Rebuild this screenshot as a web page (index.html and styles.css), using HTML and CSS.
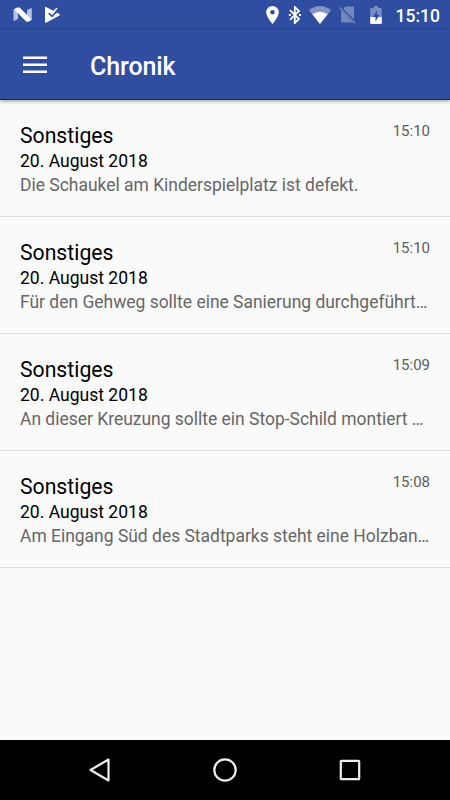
FILE: index.html
```html
<!DOCTYPE html>
<html lang="de">
<head>
    <meta charset="UTF-8">
    <meta name="viewport" content="width=device-width, initial-scale=1.0">
    <title>Chronik</title>
    <link rel="stylesheet" href="styles.css">
</head>
<body>
    <div class="screen">
        <div class="status-bar">
            <div class="notifications">
                <svg class="icon-n" width="20" height="16" viewBox="0 0 20 16">
                    <path d="M.5 2.500L5 1v11L.5 14.200zM14 3L18.800 1v12L14 14.600z" fill="#fff" opacity=".65"/>
                    <path d="M2.500 1.200Q4.500 0 6.600 .6L18.500 12.600Q16.500 15.400 13.200 14.500L1.500 2.800z" fill="#fff"/>
                </svg>
                <svg class="icon-play" width="17" height="18" viewBox="0 0 17 18">
                    <path d="M1 1.700Q1 .7 2 1.100L15.500 8Q16.300 8.700 15.500 9.400L2 16.700Q1 17 1 16z" fill="#fff"/>
                    <path d="M4.800 7.200L8 10.300L15.500 3" fill="none" stroke="#304ea1" stroke-width="1.700"/>
                    <path d="M8.300 7L13 2.300" fill="none" stroke="#fff" stroke-width="1.600"/>
                </svg>
            </div>
            <div class="system">
                <svg class="icon-pin" width="13" height="18" viewBox="0 0 13 18">
                    <path d="M6.500 0A6.300 6.300 0 0 0 .2 6.300C.2 11 6.500 18 6.500 18s6.300-7 6.300-11.700A6.300 6.300 0 0 0 6.500 0zm0 8.600a2.300 2.300 0 1 1 0-4.600 2.300 2.300 0 0 1 0 4.600z" fill="#fff"/>
                </svg>
                <svg class="icon-bluetooth" width="14" height="18" viewBox="0 0 14 18">
                    <path d="M2 4.200L11 13L6.800 17V1L11 5L2 13.800" fill="none" stroke="#fff" stroke-width="1.800"/>
                    <path d="M.8 8h2v2h-2zM11 8h2v2h-2z" fill="#fff"/>
                </svg>
                <svg class="icon-wifi" width="22" height="18" viewBox="0 0 22 18">
                    <path d="M11 18L0 4.200Q11-4 22 4.200z" fill="#fff" opacity=".4"/>
                    <path d="M11 18L3.400 8.300Q11 3 18.600 8.300z" fill="#fff"/>
                </svg>
                <svg class="icon-nosim" width="17" height="18" viewBox="0 0 17 18">
                    <path d="M6.500 .5H14q1 0 1 1v12L4.300 2.800zM2.200 4.500L14 16.500H3.200q-1.200 0-1.200-1z" fill="#fff" opacity=".33"/>
                    <path d="M.5 1.500L16 17.200" stroke="#fff" stroke-width="1.300" opacity=".33"/>
                </svg>
                <svg class="icon-battery" width="12" height="18" viewBox="0 0 12 18">
                    <path d="M4 0h4v2h2.800q1 0 1 1v8H.2V3q0-1 1-1H4z" fill="#fff" opacity=".35"/>
                    <path d="M.2 11h11.600v6q0 1-1 1H1.200q-1 0-1-1z" fill="#fff"/>
                    <path d="M7 4.500L3 11h2.500v4.500L9.500 9H7z" fill="#304ea1"/>
                </svg>
                <span class="clock">15:10</span>
            </div>
        </div>

        <header class="app-bar">
            <svg class="icon-menu" width="24" height="18" viewBox="0 0 24 18">
                <path d="M0 .4h24v2.700H0zM0 7.400h24v2.700H0zM0 14.400h24v2.700H0z" fill="#fff"/>
            </svg>
            <h1>Chronik</h1>
        </header>

        <main class="list">
            <div class="entry">
                <div class="row">
                    <h2>Sonstiges</h2>
                    <span class="time">15:10</span>
                </div>
                <div class="date">20. August 2018</div>
                <div class="text">Die Schaukel am Kinderspielplatz ist defekt.</div>
            </div>
            <div class="entry">
                <div class="row">
                    <h2>Sonstiges</h2>
                    <span class="time">15:10</span>
                </div>
                <div class="date">20. August 2018</div>
                <div class="text">Für den Gehweg sollte eine Sanierung durchgeführt…</div>
            </div>
            <div class="entry">
                <div class="row">
                    <h2>Sonstiges</h2>
                    <span class="time">15:09</span>
                </div>
                <div class="date">20. August 2018</div>
                <div class="text">An dieser Kreuzung sollte ein Stop-Schild montiert …</div>
            </div>
            <div class="entry">
                <div class="row">
                    <h2>Sonstiges</h2>
                    <span class="time">15:08</span>
                </div>
                <div class="date">20. August 2018</div>
                <div class="text">Am Eingang Süd des Stadtparks steht eine Holzban…</div>
            </div>
        </main>

        <nav class="nav-bar">
            <svg width="26" height="26" viewBox="0 0 26 26">
                <path d="M3.500 13L21.500 2.500v21z" fill="none" stroke="#eee" stroke-width="2.200" stroke-linejoin="round"/>
            </svg>
            <svg width="26" height="26" viewBox="0 0 26 26">
                <circle cx="13" cy="13" r="10.700" fill="none" stroke="#eee" stroke-width="2.200"/>
            </svg>
            <svg width="26" height="26" viewBox="0 0 26 26">
                <rect x="3.800" y="3.800" width="18.400" height="18.400" rx=".5" fill="none" stroke="#eee" stroke-width="2.200"/>
            </svg>
        </nav>
    </div>
</body>
</html>
```
FILE: styles.css
```css
* {
    box-sizing: border-box;
}
body {
    margin: 0;
    background: #fafafa;
    font-family: Roboto, "Noto Sans", sans-serif;
    overflow: hidden;
}
h1, h2 {
    margin: 0;
}
svg {
    display: block;
    flex: none;
}
.screen {
    display: flex;
    flex-direction: column;
    width: 450px;
    height: 800px;
}
.status-bar {
    display: flex;
    justify-content: space-between;
    height: 30px;
    padding: 0 10px 0 13px;
    background: #304ea1;
    color: #fff;
}
.notifications, .system {
    display: flex;
    align-items: center;
}
.icon-play {
    margin-left: 11px;
}
.icon-bluetooth {
    margin-left: 9px;
}
.icon-wifi {
    margin-left: 7px;
}
.icon-nosim {
    margin-left: 8px;
}
.icon-battery {
    margin-left: 14px;
}
.clock {
    margin-left: 14px;
    padding-top: 2px;
    font-size: 17.5px;
    font-weight: 500;
    line-height: 30px;
}
.app-bar {
    display: flex;
    align-items: center;
    height: 70px;
    padding-left: 23px;
    background: #304ea1;
    border-bottom: 1px solid #0a2590;
    box-shadow: 0 1px 4px rgba(0, 0, 0, 0.4);
    color: #fff;
    z-index: 1;
}
.app-bar h1 {
    margin-left: 43px;
    padding-top: 4px;
    font-size: 25px;
    font-weight: 500;
    line-height: 30px;
    letter-spacing: -0.1px;
}
.list {
    flex: 1;
}
.entry {
    height: 117px;
    padding: 21px 20px 0;
    border-bottom: 1px solid #dedede;
}
.row {
    display: flex;
    justify-content: space-between;
    height: 28px;
}
.entry h2 {
    font-size: 21.2px;
    font-weight: 400;
    line-height: 30px;
    color: #000;
}
.time {
    font-size: 15px;
    line-height: 20px;
    color: #5c5c5c;
}
.date {
    font-size: 17.55px;
    line-height: 24px;
    color: #000;
}
.text {
    font-size: 17.47px;
    line-height: 24px;
    color: #666;
    white-space: nowrap;
}
.nav-bar {
    display: flex;
    justify-content: center;
    align-items: center;
    gap: 99px;
    height: 60px;
    background: #000;
}
```
